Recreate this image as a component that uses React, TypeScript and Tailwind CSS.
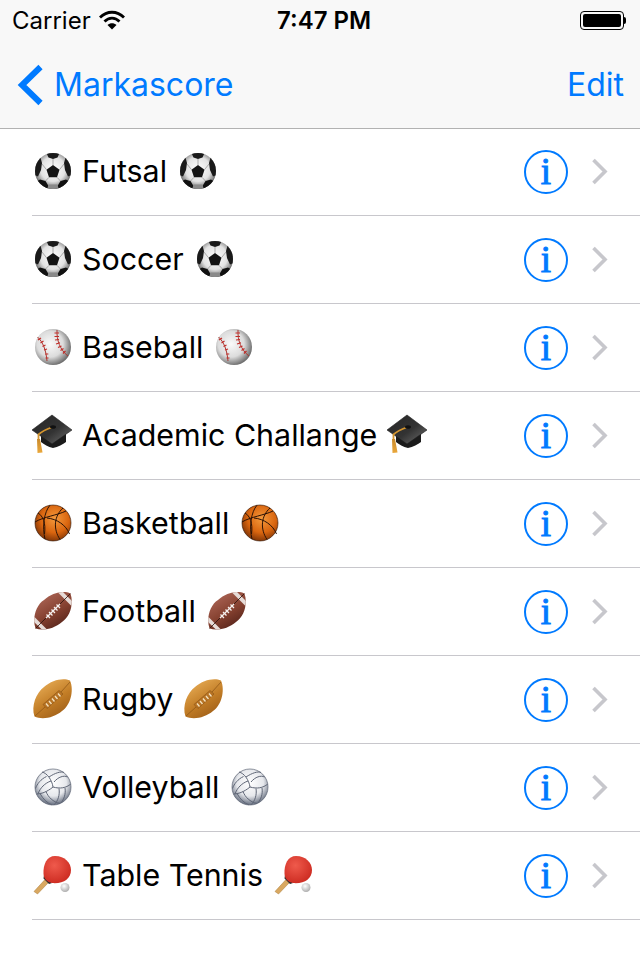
import type { ReactNode } from "react";

function Soccer() {
  return (
    <svg viewBox="-1 0 40 40" className="w-10 h-10 shrink-0">
      <defs>
        <radialGradient id="soccerBall" cx="50%" cy="45%" r="55%">
          <stop offset="0%" stopColor="#ffffff" />
          <stop offset="62%" stopColor="#e2e2e2" />
          <stop offset="88%" stopColor="#8f8f8f" />
          <stop offset="100%" stopColor="#3c3c3c" />
        </radialGradient>
        <clipPath id="soccerClip">
          <circle cx="20" cy="20" r="18" />
        </clipPath>
      </defs>
      <circle cx="20" cy="20" r="18" fill="url(#soccerBall)" />
      <g clipPath="url(#soccerClip)">
        <path d="M20 14l6.500 4.700-2.500 7.600h-8l-2.500-7.600z" fill="#141414" />
        <path d="M13 1H27L24.500 6.500 20 8 15.500 6.500z" fill="#1a1a1a" />
        <path d="M7 5L1 14 1.500 24 5 25.500 8 19 9 12z" fill="#1a1a1a" />
        <path d="M33 5L39 14 38.500 24 35 25.500 32 19 31 12z" fill="#1a1a1a" />
        <path d="M3 31L14 40 15.500 35 12.500 30 7 28.500z" fill="#111" />
        <path d="M37 31L26 40 24.500 35 27.500 30 33 28.500z" fill="#111" />
        <path d="M14 39H26L24.500 33.500H15.500z" fill="#8a8a8a" />
      </g>
      <path d="M20 8V14M13.500 18.700L9 13M26.500 18.700L31 13M16 26.300L12.500 30M24 26.300L27.500 30" stroke="#8c8c8c" strokeWidth="0.700" />
    </svg>
  );
}

function Baseball() {
  return (
    <svg viewBox="-1 0 40 40" className="w-10 h-10 shrink-0">
      <defs>
        <radialGradient id="baseballBall" cx="42%" cy="42%" r="60%">
          <stop offset="0%" stopColor="#fafafa" />
          <stop offset="60%" stopColor="#dcdcdc" />
          <stop offset="100%" stopColor="#6c6c6c" />
        </radialGradient>
      </defs>
      <circle cx="20" cy="20" r="18" fill="url(#baseballBall)" />
      <path d="M4.500 10C10 15 13 23 14 34" fill="none" stroke="#a83a34" strokeWidth="1" />
      <path d="M24 3C23.500 13 27 23 35 29" fill="none" stroke="#a83a34" strokeWidth="1" />
      <path d="M5 13l3-2M7.500 16l3-2M9.500 19.500l3-1.500M11 23l3-1M12 27h3.300M12.500 31h3M21.500 6h4.500M21.500 9.500h4.500M22 13l4-.5M23 17l4-1.200M25 20.500l3.500-1.500M27.500 23.500l3-2M30 26.500l2.500-2.500" stroke="#c32b27" strokeWidth="1.200" />
    </svg>
  );
}

function GradCap() {
  return (
    <svg viewBox="0 1 40 40" className="w-10 h-10 shrink-0 overflow-visible">
      <defs>
        <linearGradient id="capTop" x1="0" y1="0" x2="1" y2="1">
          <stop offset="0%" stopColor="#262626" />
          <stop offset="55%" stopColor="#333" />
          <stop offset="100%" stopColor="#707070" />
        </linearGradient>
        <linearGradient id="tassel" x1="0" y1="0" x2="0" y2="1">
          <stop offset="0%" stopColor="#c98a2b" />
          <stop offset="100%" stopColor="#eaa83c" />
        </linearGradient>
      </defs>
      <path d="M9 19v9c3 2 7 5 12 6 5-1 10-4 13-6v-9z" fill="#1b1b1b" />
      <path d="M20 1L40 16 20 30 0 16z" fill="url(#capTop)" />
      <path d="M20 1L40 16 20 30 0 16z" fill="none" stroke="#1c1c1c" strokeWidth="0.600" />
      <path d="M21 13C15 15 9 18 6.500 20.500V25" fill="none" stroke="#d4952f" strokeWidth="1.800" />
      <ellipse cx="21" cy="13" rx="3" ry="1.800" fill="#111" />
      <path d="M5 25h3l2.500 13.500-5 .5z" fill="url(#tassel)" />
    </svg>
  );
}

function Basketball() {
  return (
    <svg viewBox="-1 0 40 40" className="w-10 h-10 shrink-0">
      <defs>
        <radialGradient id="basketBall" cx="55%" cy="38%" r="65%">
          <stop offset="0%" stopColor="#f59a3c" />
          <stop offset="60%" stopColor="#d9650f" />
          <stop offset="100%" stopColor="#7a3206" />
        </radialGradient>
      </defs>
      <circle cx="20" cy="20" r="18" fill="url(#basketBall)" />
      <g fill="none" stroke="#2a1206" strokeWidth="1">
        <circle cx="20" cy="20" r="18" strokeWidth="0.600" />
        <path d="M2 19C10 14 25 12 33 8" />
        <path d="M17 2.200C11 9 9 24 12 36.200" />
        <path d="M5 10C10 13 13 20 11.500 31" />
        <path d="M30 5C21 13 20 26 27 36.500" />
        <path d="M14 15C24 16 33 22 36.500 31" />
      </g>
    </svg>
  );
}

function Football() {
  return (
    <svg viewBox="-1 0 40 40" className="w-10 h-10 shrink-0">
      <defs>
        <linearGradient id="footballBody" x1="0.200" y1="0" x2="0.800" y2="1">
          <stop offset="0%" stopColor="#b0695a" />
          <stop offset="55%" stopColor="#84402f" />
          <stop offset="100%" stopColor="#4e1f17" />
        </linearGradient>
        <clipPath id="footballClip">
          <path d="M37.500 2.500C41 13 37 26 29 31 21 38 10 40 2.500 37.500 -1 27 3 14 11 9 19 2 30 -1 37.500 2.500z" />
        </clipPath>
      </defs>
      <path d="M37.500 2.500C41 13 37 26 29 31 21 38 10 40 2.500 37.500 -1 27 3 14 11 9 19 2 30 -1 37.500 2.500z" fill="url(#footballBody)" />
      <g clipPath="url(#footballClip)">
        <path d="M24.500 1L39 15.500 40 11 29 0z" fill="#e6dcd8" />
        <path d="M0 24.500L15.500 40 11 40.500 -1 29z" fill="#e6dcd8" />
        <path d="M2 38L38 2" stroke="#2a100b" strokeWidth="0.800" />
      </g>
      <path d="M13 27L27 13" stroke="#f5f0ee" strokeWidth="1.300" />
      <path d="M13.500 23.500l3.500 3.500M16 21l3.500 3.500M18.500 18.500l3.500 3.500M21 16l3.500 3.500M23.500 13.500l3.500 3.500" stroke="#f5f0ee" strokeWidth="1.300" />
    </svg>
  );
}

function Rugby() {
  return (
    <svg viewBox="-1 0 40 40" className="w-10 h-10 shrink-0 overflow-visible">
      <defs>
        <linearGradient id="rugbyBody" x1="0.200" y1="0" x2="0.800" y2="1">
          <stop offset="0%" stopColor="#eab05a" />
          <stop offset="55%" stopColor="#c27d26" />
          <stop offset="100%" stopColor="#9a5a16" />
        </linearGradient>
      </defs>
      <path d="M37 1.500C41.500 12 37 27 29 32 21 39 9 41 1.500 37.500 -2 27 3 14 11 8 19 1 30 -1.500 37 1.500z" fill="url(#rugbyBody)" />
      <path d="M2 37L12 28M28 13L37 3" stroke="#8a5214" strokeWidth="0.700" />
      <path d="M10 25.500L26 11.500 30 15 14 29.500z" fill="#b87425" stroke="#8a5214" strokeWidth="0.600" />
      <path d="M13 24.500l2.500 3M16 22l2.500 3M19 19.500l2.500 3M22 17l2.500 3M25 14.500l2.500 3" stroke="#f3e2c0" strokeWidth="1.300" />
    </svg>
  );
}

function Volleyball() {
  return (
    <svg viewBox="-1 0 40 40" className="w-10 h-10 shrink-0">
      <defs>
        <radialGradient id="volleyBall" cx="50%" cy="38%" r="60%">
          <stop offset="0%" stopColor="#ffffff" />
          <stop offset="62%" stopColor="#e6e8ec" />
          <stop offset="100%" stopColor="#6d7585" />
        </radialGradient>
      </defs>
      <circle cx="20" cy="20" r="18" fill="url(#volleyBall)" />
      <g fill="none" stroke="#5f6676" strokeWidth="1">
        <circle cx="20" cy="20" r="18" strokeWidth="0.700" />
        <path d="M20 20C19 13 14 6 9 5" />
        <path d="M21 15C25 10 31 8 34.500 10" />
        <path d="M16 10C22 6 28 4 31 5.500" />
        <path d="M20 20C27 22 33 21 37.800 17" />
        <path d="M26 21.500C27 28 25 34 21 37.900" />
        <path d="M32 21C33 27 31 32 28 36" />
        <path d="M20 20C14 25 8 27 3.500 27" />
        <path d="M13 24.500C15 30 20 35 27 36.500" />
        <path d="M7 26.500C10 32 14 36 19 37.900" />
        <path d="M13.500 9.500C8 12 4 17 2.500 21.500" />
        <path d="M18 14C12 16 7 21 5 27" />
      </g>
    </svg>
  );
}

function Paddle() {
  return (
    <svg viewBox="0 0 40 40" className="w-10 h-10 shrink-0">
      <defs>
        <radialGradient id="paddleRed" cx="40%" cy="35%" r="70%">
          <stop offset="0%" stopColor="#ef5a4c" />
          <stop offset="100%" stopColor="#cc2a20" />
        </radialGradient>
        <radialGradient id="paddleBall" cx="40%" cy="35%" r="70%">
          <stop offset="0%" stopColor="#ffffff" />
          <stop offset="100%" stopColor="#a9a9a9" />
        </radialGradient>
      </defs>
      <path d="M2 36.500L13 24.500 16.500 27.500 5.500 39z" fill="#d9a860" stroke="#a87a3a" strokeWidth="0.500" />
      <path d="M11.500 23.500L17 29 20 28 12 20z" fill="#2b2b2b" />
      <path d="M23 1C33 1 39 8 39 15 39 24 31 29 20 28 15 27 12 24 11.500 19 11 9 15 1 23 1z" fill="url(#paddleRed)" />
      <circle cx="33" cy="32.500" r="4.500" fill="url(#paddleBall)" />
    </svg>
  );
}

function InfoIcon() {
  return (
    <div className="w-11 h-11 rounded-full border-2 border-[#007aff] flex items-center justify-center shrink-0">
      <span className="font-['Liberation_Serif',serif] text-[37px] leading-none text-[#007aff] [-webkit-text-stroke:1px_#007aff]">i</span>
    </div>
  );
}

function Chevron() {
  return (
    <svg viewBox="0 0 18 28" className="w-[18px] h-7 shrink-0">
      <path d="M3.500 2L15 13.500 3.500 25" fill="none" stroke="#c7c7cc" strokeWidth="3.600" />
    </svg>
  );
}

const sports: { name: string; icon: ReactNode }[] = [
  { name: "Futsal", icon: <Soccer /> },
  { name: "Soccer", icon: <Soccer /> },
  { name: "Baseball", icon: <Baseball /> },
  { name: "Academic Challange", icon: <GradCap /> },
  { name: "Basketball", icon: <Basketball /> },
  { name: "Football", icon: <Football /> },
  { name: "Rugby", icon: <Rugby /> },
  { name: "Volleyball", icon: <Volleyball /> },
  { name: "Table Tennis", icon: <Paddle /> },
];

export default function App() {
  return (
    <div className="w-[640px] h-[960px] bg-white font-['Inter',sans-serif] text-black overflow-hidden">
      {/* Status bar + nav */}
      <header className="h-[129px] bg-[#f8f8f8] border-b border-[#b2b2b2] flex flex-col">
        <div className="h-10 px-3 pt-px flex items-center justify-between relative">
          <div className="flex items-center gap-2">
            <span className="text-2xl leading-none">Carrier</span>
            <svg viewBox="0 0 26 20" className="w-[26px] h-5 -mt-0.5">
              <path d="M1 7.500C8 .5 18 .5 25 7.500" fill="none" stroke="#000" strokeWidth="2.800" />
              <path d="M5.500 11.500C10 7 16 7 20.500 11.500" fill="none" stroke="#000" strokeWidth="2.800" />
              <path d="M13 19.500L8.500 15C11 12.500 15 12.500 17.500 15z" fill="#000" />
            </svg>
          </div>
          <span className="absolute left-[277px] text-2xl font-semibold leading-none">7:47 PM</span>
          <div className="flex items-center mr-0.5">
            <div className="w-11 h-[19px] rounded-[4px] border border-black p-[2px]">
              <div className="w-full h-full bg-black rounded-[2px]" />
            </div>
            <div className="w-[2px] h-[7px] bg-black rounded-r-sm" />
          </div>
        </div>
        <div className="flex-1 flex items-center justify-between pl-[17px] pr-[16px] pt-px text-[#007aff] text-[32px]">
          <div className="flex items-center gap-[10px]">
            <svg viewBox="0 0 27 42" className="w-[27px] h-[42px]">
              <path d="M23.500 3L5 21 23.500 39" fill="none" stroke="#007aff" strokeWidth="6" />
            </svg>
            <span>Markascore</span>
          </div>
          <span>Edit</span>
        </div>
      </header>

      <ul className="-mt-px">
        {sports.map((sport) => (
          <li key={sport.name} className="pl-8">
            <div className="h-[88px] border-b border-[#c8c7cc] flex items-center pr-[32px]">
              <div className="flex-1 flex items-center gap-[10px] text-[30.4px]">
                {sport.icon}
                <span>{sport.name}</span>
                {sport.icon}
              </div>
              <InfoIcon />
              <div className="ml-[22px]">
                <Chevron />
              </div>
            </div>
          </li>
        ))}
      </ul>
    </div>
  );
}
